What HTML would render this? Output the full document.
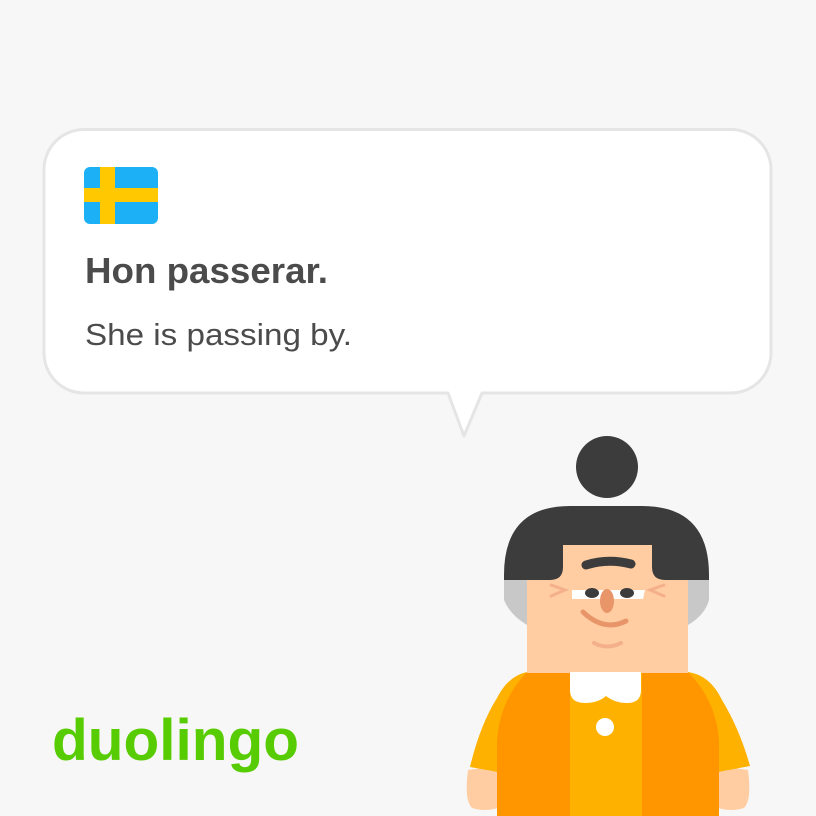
<!DOCTYPE html>
<html><head><meta charset="utf-8"><style>
html,body{margin:0;padding:0;background:#f7f7f7;}
body{width:816px;height:816px;overflow:hidden;position:relative;font-family:"Liberation Sans",sans-serif;}
</style></head><body>
<svg width="816" height="816" viewBox="0 0 816 816" xmlns="http://www.w3.org/2000/svg" style="position:absolute;left:0;top:0">
<rect width="816" height="816" fill="#f7f7f7"/>
<path d="M84,129.5 H731 A40,40 0 0 1 771,169.5 V353 A40,40 0 0 1 731,393 H482 L464,436 L448,393 H84 A40,40 0 0 1 44,353 V169.5 A40,40 0 0 1 84,129.5 Z" fill="#fff" stroke="#e5e5e5" stroke-width="3" stroke-linejoin="round"/>
<rect x="84" y="167" width="74" height="57" rx="6" fill="#1cb0f6"/>
<rect x="100" y="167" width="15" height="57" fill="#ffc800"/>
<rect x="84" y="188" width="74" height="14" fill="#ffc800"/>
<text x="85" y="283" font-family="Liberation Sans, sans-serif" font-weight="bold" font-size="36" fill="#4b4b4b" textLength="243" lengthAdjust="spacingAndGlyphs">Hon passerar.</text>
<text x="85" y="345" font-family="Liberation Sans, sans-serif" font-size="31" fill="#4b4b4b" textLength="267" lengthAdjust="spacingAndGlyphs">She is passing by.</text>
<text x="52" y="760" font-family="Liberation Sans, sans-serif" font-weight="bold" font-size="58" fill="#58cc02" textLength="247" lengthAdjust="spacingAndGlyphs">duolingo</text>
<circle cx="607" cy="467" r="31" fill="#3c3c3c"/>
<path d="M504,575 V600 Q510,615 527,625 H688 Q705,615 709,600 V575 Z" fill="#c8c8c8"/>
<path d="M468,770 Q464,800 472,808 Q485,812 498,808 V766 Z" fill="#ffcda1"/>
<path d="M748,770 Q752,800 744,808 Q731,812 718,808 V766 Z" fill="#ffcda1"/>
<path d="M527,672 H688 Q710,675 722,700 Q740,730 750,766 L718,772 V816 H498 V772 L470,767 Q480,725 497,698 Q508,676 527,672 Z" fill="#ffb100"/>
<path d="M527,672 H570 V816 H497 V740 Q500,700 527,672 Z" fill="#ff9600"/>
<path d="M688,672 H642 V816 H719 V740 Q716,700 688,672 Z" fill="#ff9600"/>
<rect x="527" y="540" width="161" height="133" rx="4" fill="#ffcda1"/>
<rect x="527" y="660" width="161" height="13" fill="#ffcda1"/>
<path d="M504,575 Q504,506 570,506 H642 Q709,506 709,575 V580 H665 Q652,580 652,567 V545 H563 V567 Q563,580 550,580 H504 Z" fill="#3c3c3c"/>
<path d="M570,672 H641 V690 Q641,703 627,703 Q615,703 606,696 Q598,703 585,703 Q570,703 570,690 Z" fill="#fff"/>
<circle cx="605" cy="727" r="9" fill="#fff"/>
<path d="M586,565 Q608,558 631,564" stroke="#3c3c3c" stroke-width="9" stroke-linecap="round" fill="none"/>
<path d="M572,590 H645 L643,599 H572 Z" fill="#fff"/>
<ellipse cx="592" cy="593" rx="7" ry="5" fill="#3c3c3c"/>
<ellipse cx="627" cy="593" rx="7" ry="5" fill="#3c3c3c"/>
<ellipse cx="607" cy="601" rx="7" ry="12" fill="#e8956a"/>
<path d="M583,612 Q604,632 626,621" stroke="#e8956a" stroke-width="5" stroke-linecap="round" fill="none"/>
<path d="M594,643 Q607,650 621,643" stroke="#f4b08a" stroke-width="4" stroke-linecap="round" fill="none"/>
<path d="M551,585 L565,590 L551,596 M664,585 L650,590 L664,596" stroke="#f4b08a" stroke-width="3" stroke-linecap="round" fill="none"/>
</svg>
</body></html>
